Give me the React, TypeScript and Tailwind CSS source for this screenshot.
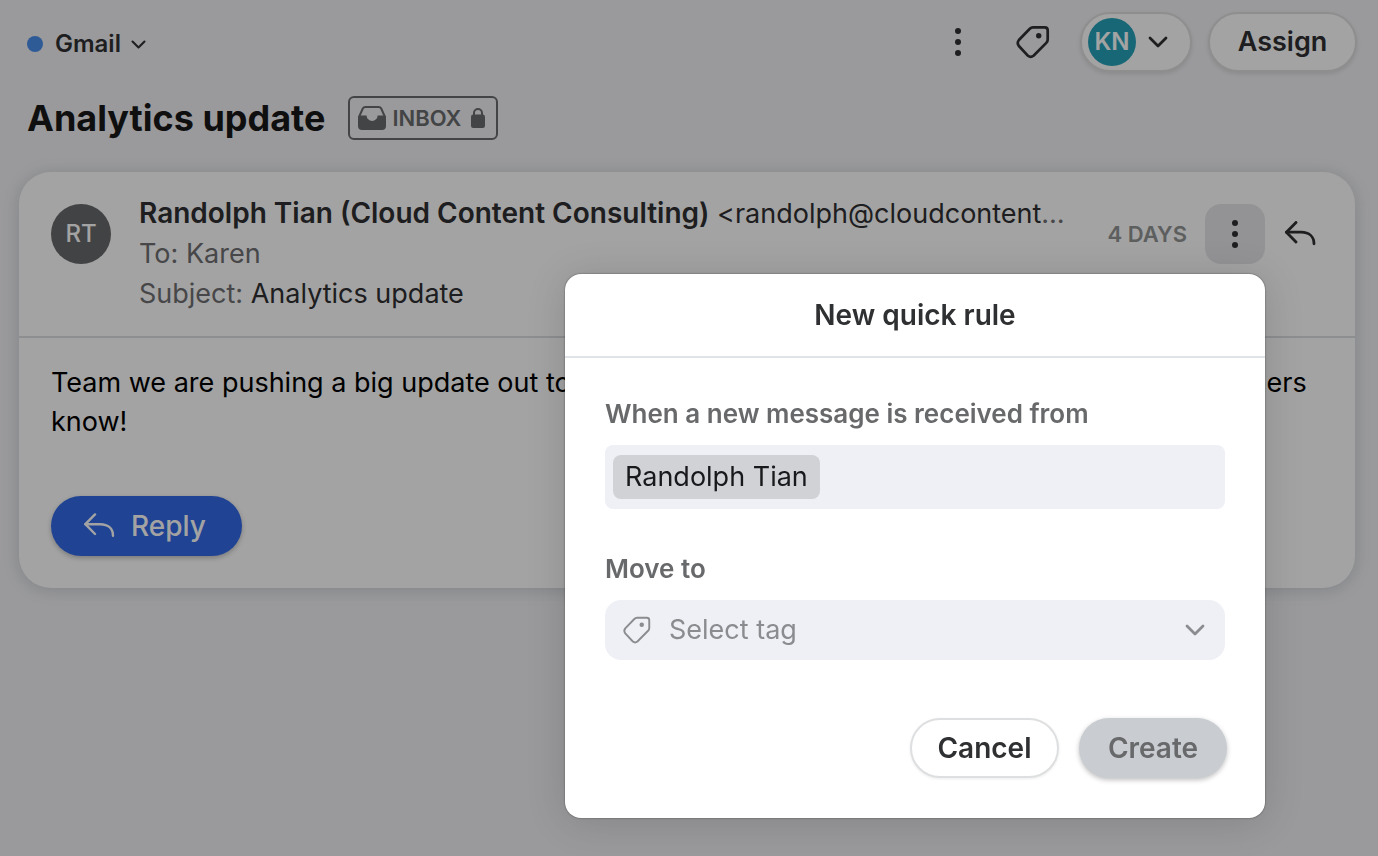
import { useState } from 'react';

interface IconProps {
  className?: string;
}

const TAG_PATH =
  'M18 3.3H29.7Q32.7 3.3 32.7 6.3V15.5Q32.7 17.5 31.3 18.9L18.5 31.8Q15.7 34 13 31.8L3.9 22Q1.6 19 3.9 16L14.8 4.8Q16.2 3.3 18 3.3Z';

function KebabIcon() {
  return (
    <svg width="6" height="28" viewBox="0 0 6 28" fill="currentColor" aria-hidden="true">
      <circle cx="3" cy="3" r="3" />
      <circle cx="3" cy="14" r="3" />
      <circle cx="3" cy="25" r="3" />
    </svg>
  );
}

function TagIcon({ className }: IconProps) {
  return (
    <svg className={className} viewBox="0 0 36 36" fill="none" stroke="currentColor" aria-hidden="true">
      <path d={TAG_PATH} strokeLinejoin="round" />
      <circle cx="23.7" cy="11.8" r="2.7" fill="currentColor" stroke="none" />
    </svg>
  );
}

function ChevronIcon({ className }: IconProps) {
  return (
    <svg
      className={className}
      viewBox="0 0 20 12"
      fill="none"
      stroke="currentColor"
      strokeWidth="2.8"
      strokeLinecap="round"
      strokeLinejoin="round"
      aria-hidden="true"
    >
      <path d="M2 2l8 8 8-8" />
    </svg>
  );
}

function ReplyIcon({ className }: IconProps) {
  return (
    <svg
      className={className}
      width="32"
      height="26"
      viewBox="0 0 32 26"
      fill="none"
      stroke="currentColor"
      strokeLinecap="round"
      strokeLinejoin="round"
      aria-hidden="true"
    >
      <path d="M12 1.4L2.4 11.2L12 21" />
      <path d="M2.4 11.2H17C25.5 11.2 30 16 30 22.8" />
    </svg>
  );
}

function InboxIcon() {
  return (
    <svg width="28" height="24" viewBox="0 0 28 24" fill="none" aria-hidden="true">
      <path d="M1 11L4.8 2.5Q5.6 1 7.4 1H20.6Q22.4 1 23.2 2.5L27 11" stroke="currentColor" strokeWidth="2" />
      <path
        d="M0 11Q0 9.4 1.5 9.4H8.6A5.5 5.5 0 0 0 19.6 9.4H26.5Q28 9.4 28 11V20A4 4 0 0 1 24 24H4A4 4 0 0 1 0 20Z"
        fill="currentColor"
      />
    </svg>
  );
}

function LockIcon() {
  return (
    <svg width="14" height="20" viewBox="0 0 14 20" fill="none" aria-hidden="true">
      <path d="M3 8V5A4 4 0 0 1 11 5V8" stroke="currentColor" strokeWidth="2" />
      <rect y="6.5" width="14" height="13.5" rx="2.2" fill="currentColor" />
    </svg>
  );
}

function QuickRuleDialog() {
  const [sender, setSender] = useState('');
  const [tag, setTag] = useState('');

  return (
    <form
      role="dialog"
      aria-labelledby="rule-title"
      onSubmit={(e) => e.preventDefault()}
      className="absolute top-full right-0 z-20 mt-[10px] w-[700px] rounded-2xl bg-white pb-10 shadow-[0_0_2px_rgba(0,0,0,0.5),0_4px_40px_rgba(0,0,0,0.14)]"
    >
      <h2
        id="rule-title"
        className="flex h-[84px] items-center justify-center border-b-2 border-[#e0e4e8] text-[28px] font-semibold text-[#2f3032]"
      >
        New quick rule
      </h2>

      <div className="flex flex-col px-10 pt-10">
        <label htmlFor="rule-sender" className="text-[26px] leading-8 font-semibold text-[#68696b]">
          When a new message is received from
        </label>
        <div className="mt-[15px] flex h-16 items-center rounded-lg bg-[#eff0f5] px-2">
          <span className="rounded-lg bg-[#d1d2d6] px-3 text-[27px] leading-[44px] text-[#18191b]">
            Randolph Tian
          </span>
          <input
            id="rule-sender"
            type="text"
            value={sender}
            onChange={(e) => setSender(e.target.value)}
            className="ml-2 min-w-0 flex-1 bg-transparent text-[27px] outline-none"
          />
        </div>

        <label htmlFor="rule-tag" className="mt-11 text-[26px] leading-8 font-semibold text-[#68696b]">
          Move to
        </label>
        <div className="relative mt-[15px] text-[#8b8c8f]">
          <TagIcon className="pointer-events-none absolute top-[15px] left-[17px] size-[30px] stroke-[2.3]" />
          <select
            id="rule-tag"
            value={tag}
            onChange={(e) => setTag(e.target.value)}
            className="h-[60px] w-full appearance-none rounded-2xl bg-[#eff0f5] pr-12 pl-16 text-[27px]"
          >
            <option value="">Select tag</option>
          </select>
          <ChevronIcon className="pointer-events-none absolute top-6 right-5 h-3 w-5" />
        </div>
      </div>

      {/* Actions */}
      <div className="mt-[58px] flex justify-end gap-5 pr-[38px]">
        <button
          type="button"
          className="h-[60px] w-[149px] rounded-full border-2 border-[#dedfe0] bg-white text-[28px] font-semibold text-[#2f3032] shadow-[0_1px_3px_rgba(0,0,0,0.08)]"
        >
          Cancel
        </button>
        <button
          type="submit"
          disabled
          className="h-[60px] w-[148px] rounded-full bg-[#c9ccd0] text-[28px] font-semibold text-[#68696b] shadow-[0_2px_5px_rgba(0,0,0,0.25)]"
        >
          Create
        </button>
      </div>
    </form>
  );
}

export default function App() {
  return (
    <div className="min-h-screen bg-[#f1f1f4] pb-8 font-['Inter',sans-serif] text-[#2f3032]">
      {/* Toolbar */}
      <header className="flex items-center pt-3 pr-[21px] pl-[27px]">
        <button type="button" className="flex items-center pt-1 text-[24px] leading-8 font-semibold">
          <span className="mr-3 size-4 rounded-full bg-[#498ee9]" />
          Gmail
          <ChevronIcon className="ml-[10px] h-[9px] w-[15px]" />
        </button>
        <div className="ml-auto flex items-center">
          <button type="button" aria-label="More" className="flex size-[60px] items-center justify-center">
            <KebabIcon />
          </button>
          <button type="button" aria-label="Tag" className="ml-[15px] flex size-[60px] items-center justify-center">
            <TagIcon className="size-9 stroke-[2.7]" />
          </button>
          <button
            type="button"
            aria-label="Assignee KN"
            className="ml-[17px] flex h-[60px] w-28 items-center gap-3 rounded-full border-2 border-[#dfdfe0] bg-white pl-[6px] shadow-[0_2px_4px_rgba(0,0,0,0.1)]"
          >
            <span className="flex size-12 items-center justify-center rounded-full bg-[#27a2ba] text-[24px] font-semibold text-white">
              KN
            </span>
            <ChevronIcon className="h-3 w-5" />
          </button>
          <button
            type="button"
            className="ml-4 h-[60px] w-[149px] rounded-full border-2 border-[#dfdfe0] bg-white text-[27px] font-semibold shadow-[0_2px_4px_rgba(0,0,0,0.1)]"
          >
            Assign
          </button>
        </div>
      </header>

      <div className="mt-6 flex items-center gap-[23px] px-[27px]">
        <h1 className="text-[36px] leading-[44px] font-bold text-[#18181a]">Analytics update</h1>
        <span className="flex h-11 items-center rounded-md border-2 border-[#6a6b6d] pr-[11px] pl-2 text-[22px] font-semibold text-[#6a6b6d]">
          <InboxIcon />
          <span className="mr-[10px] ml-[6px]">INBOX</span>
          <LockIcon />
        </span>
      </div>

      {/* Message */}
      <main className="mt-8 mr-[23px] ml-[19px] rounded-[32px] bg-white shadow-[0_2px_16px_rgba(60,80,90,0.22)]">
        <div className="flex items-start border-b-2 border-[#dcdee0] px-8 pb-[22px]">
          <span className="mt-8 flex size-[60px] shrink-0 items-center justify-center rounded-full bg-[#68696b] text-[24px] font-medium text-white">
            RT
          </span>
          <div className="mt-[22px] ml-7 min-w-0 flex-1 text-[27px] leading-10 text-[#6f7072]">
            <p className="truncate">
              <span className="text-[28px] leading-none font-semibold text-[#2f3032]">
                Randolph Tian (Cloud Content Consulting)
              </span>{' '}
              <span className="text-[#2f3032]">&lt;randolph@cloudcontentconsulting.com&gt;</span>
            </p>
            <p>To: Karen</p>
            <p>
              Subject: <span className="text-[#2f3032]">Analytics update</span>
            </p>
          </div>
          <div className="mt-8 ml-10 flex shrink-0 items-center">
            <span className="text-[22px] font-semibold text-[#929394]">4 DAYS</span>
            <div className="relative ml-[18px]">
              <button
                type="button"
                aria-label="Message actions"
                className="flex size-[60px] items-center justify-center rounded-2xl bg-[#e6e7ea]"
              >
                <KebabIcon />
              </button>
              <QuickRuleDialog />
            </div>
            <button type="button" aria-label="Reply" className="ml-3 flex h-[60px] w-[46px] items-center justify-center">
              <ReplyIcon className="stroke-[2.8]" />
            </button>
          </div>
        </div>
        <div className="px-8 pt-[25px] pb-8">
          <p className="text-[27px] leading-[39px] text-black">
            Team we are pushing a big update out to analytics early this week. Please let all of your customers know!
          </p>
          <button
            type="button"
            className="mt-[55px] flex h-[60px] items-center gap-4 rounded-full bg-[#326ae7] pr-9 pl-8 text-[28px] font-medium text-white shadow-[0_2px_5px_rgba(0,0,0,0.25)]"
          >
            <ReplyIcon className="stroke-[2.4]" />
            Reply
          </button>
        </div>
      </main>

      <div className="fixed inset-0 z-10 bg-black/36" />
    </div>
  );
}
